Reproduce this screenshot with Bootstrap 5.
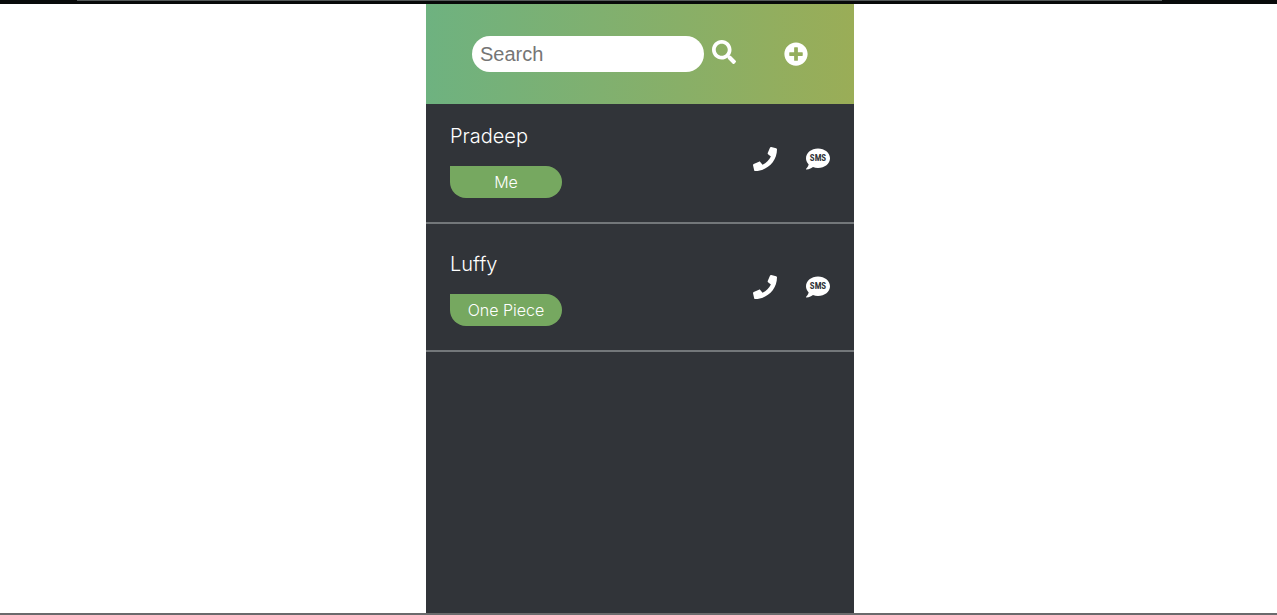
<!DOCTYPE html>
<html lang="en">
<head>
<meta charset="utf-8">
<meta name="viewport" content="width=device-width, initial-scale=1">
<title>Contacts</title>
<link href="https://cdn.jsdelivr.net/npm/bootstrap@5.3.0/dist/css/bootstrap.min.css" rel="stylesheet">
<style>
  body { font-family: Inter, "Liberation Sans", sans-serif; background: #fff; }
  .frame-top { height: 4px; background: linear-gradient(#555a5a, #555a5a) 40% 0 / 85% 1px no-repeat, #080a0a; }
  .frame-bottom { height: 2px; background: #6a6a6c; }
  .stage { padding-left: 3px; }
  .phone-app { max-width: 428px; background: #313439; color: #fff; }
  .app-header { height: 100px; padding: 0 46px; background: linear-gradient(90deg, #6eb280, #9aad57); }
  .search-form, .search-box { min-width: 0; }
  .search-box { width: 100%; height: 36px; border-radius: 18px; padding: 0 8px; font: 20px "Liberation Sans", sans-serif; color: #333; }
  .search-box::placeholder { color: #757575; opacity: 1; }
  .icon-btn { color: #fff; line-height: 0; }
  .icon-btn svg { width: 24px; height: 24px; fill: currentColor; }
  .sms-label { font: bold 190px "Roboto Condensed", "Open Sans Condensed", "Noto Sans Condensed", Lato, sans-serif; fill: #313439; }
  .contact { padding: 24px; border-bottom: 2px solid #73777a; }
  .contact:first-child { padding-top: 16px; }
  .contact-name { font-size: 20px; line-height: 32px; font-weight: 300; margin-bottom: 14px; }
  .contact-actions { gap: 29px; }
  .tag { width: 112px; height: 32px; line-height: 32px; font-size: 16px; font-weight: 300; background: #76a860; border-radius: 0 16px 16px 16px; }
</style>
</head>
<body class="d-flex flex-column min-vh-100">
<div class="frame-top"></div>
<div class="stage d-flex flex-grow-1 justify-content-center">
  <main class="phone-app w-100">
    <header class="app-header d-flex align-items-center">
      <form class="search-form d-flex align-items-center flex-grow-1 gap-2 me-5" role="search">
        <input class="search-box border-0" type="search" placeholder="Search" aria-label="Search">
        <button class="icon-btn btn p-0 border-0 pb-1" type="button" aria-label="Search contacts">
          <svg viewBox="0 0 512 512"><path d="M505 442.7L405.3 343c-4.5-4.5-10.6-7-17-7H372c27.6-35.3 44-79.7 44-128C416 93.1 322.9 0 208 0S0 93.1 0 208s93.1 208 208 208c48.3 0 92.7-16.4 128-44v16.3c0 6.4 2.5 12.5 7 17l99.7 99.7c9.4 9.4 24.6 9.4 33.9 0l28.3-28.3c9.4-9.4 9.4-24.6.1-34zM208 336c-70.7 0-128-57.2-128-128 0-70.7 57.2-128 128-128 70.7 0 128 57.2 128 128 0 70.7-57.2 128-128 128z"/></svg>
        </button>
      </form>
      <button class="icon-btn btn p-0 border-0" type="button" aria-label="Add contact">
        <svg viewBox="0 0 512 512"><path d="M256 8C119 8 8 119 8 256s111 248 248 248 248-111 248-248S393 8 256 8zm144 276c0 6.6-5.4 12-12 12h-92v92c0 6.6-5.4 12-12 12h-56c-6.6 0-12-5.4-12-12v-92h-92c-6.6 0-12-5.4-12-12v-56c0-6.6 5.4-12 12-12h92v-92c0-6.6 5.4-12 12-12h56c6.6 0 12 5.4 12 12v92h92c6.6 0 12 5.4 12 12v56z"/></svg>
      </button>
    </header>
    <ul class="list-unstyled mb-0">
      <li class="contact d-flex align-items-center justify-content-between">
        <div>
          <h2 class="contact-name">Pradeep</h2>
          <div class="tag text-center">Me</div>
        </div>
        <div class="contact-actions d-flex">
          <a class="icon-btn" href="#call-pradeep" aria-label="Call Pradeep">
            <svg viewBox="0 0 512 512"><path d="M493.4 24.6l-104-24c-11.3-2.6-22.9 3.3-27.5 13.9l-48 112c-4.2 9.8-1.4 21.3 6.9 28l60.6 49.6c-36 76.7-98.9 140.5-177.2 177.2l-49.6-60.6c-6.8-8.3-18.2-11.1-28-6.9l-112 48C3.9 366.5-2 378.1.6 389.4l24 104C27.1 504.2 36.7 512 48 512c256.1 0 464-207.5 464-464 0-11.2-7.7-20.9-18.6-23.4z"/></svg>
          </a>
          <a class="icon-btn" href="#sms-pradeep">
            <svg viewBox="0 0 512 512"><path d="M256 32C114.6 32 0 125.1 0 240c0 49.6 21.4 95 57 130.7C44.5 421.1 2.7 466 2.2 466.5c-2.2 2.3-2.8 5.7-1.5 8.7S4.8 480 8 480c66.3 0 116-31.8 140.6-51.4 32.7 12.3 69 19.4 107.4 19.4 141.4 0 256-93.1 256-208S397.4 32 256 32z"/><text class="sms-label" x="256" y="305" text-anchor="middle">SMS</text></svg>
          </a>
        </div>
      </li>
      <li class="contact d-flex align-items-center justify-content-between">
        <div>
          <h2 class="contact-name">Luffy</h2>
          <div class="tag text-center">One Piece</div>
        </div>
        <div class="contact-actions d-flex">
          <a class="icon-btn" href="#call-luffy" aria-label="Call Luffy">
            <svg viewBox="0 0 512 512"><path d="M493.4 24.6l-104-24c-11.3-2.6-22.9 3.3-27.5 13.9l-48 112c-4.2 9.8-1.4 21.3 6.9 28l60.6 49.6c-36 76.7-98.9 140.5-177.2 177.2l-49.6-60.6c-6.8-8.3-18.2-11.1-28-6.9l-112 48C3.9 366.5-2 378.1.6 389.4l24 104C27.1 504.2 36.7 512 48 512c256.1 0 464-207.5 464-464 0-11.2-7.7-20.9-18.6-23.4z"/></svg>
          </a>
          <a class="icon-btn" href="#sms-luffy">
            <svg viewBox="0 0 512 512"><path d="M256 32C114.6 32 0 125.1 0 240c0 49.6 21.4 95 57 130.7C44.5 421.1 2.7 466 2.2 466.5c-2.2 2.3-2.8 5.7-1.5 8.7S4.8 480 8 480c66.3 0 116-31.8 140.6-51.4 32.7 12.3 69 19.4 107.4 19.4 141.4 0 256-93.1 256-208S397.4 32 256 32z"/><text class="sms-label" x="256" y="305" text-anchor="middle">SMS</text></svg>
          </a>
        </div>
      </li>
    </ul>
  </main>
</div>
<div class="frame-bottom"></div>
<script src="https://cdn.jsdelivr.net/npm/bootstrap@5.3.0/dist/js/bootstrap.bundle.min.js"></script>
</body>
</html>
